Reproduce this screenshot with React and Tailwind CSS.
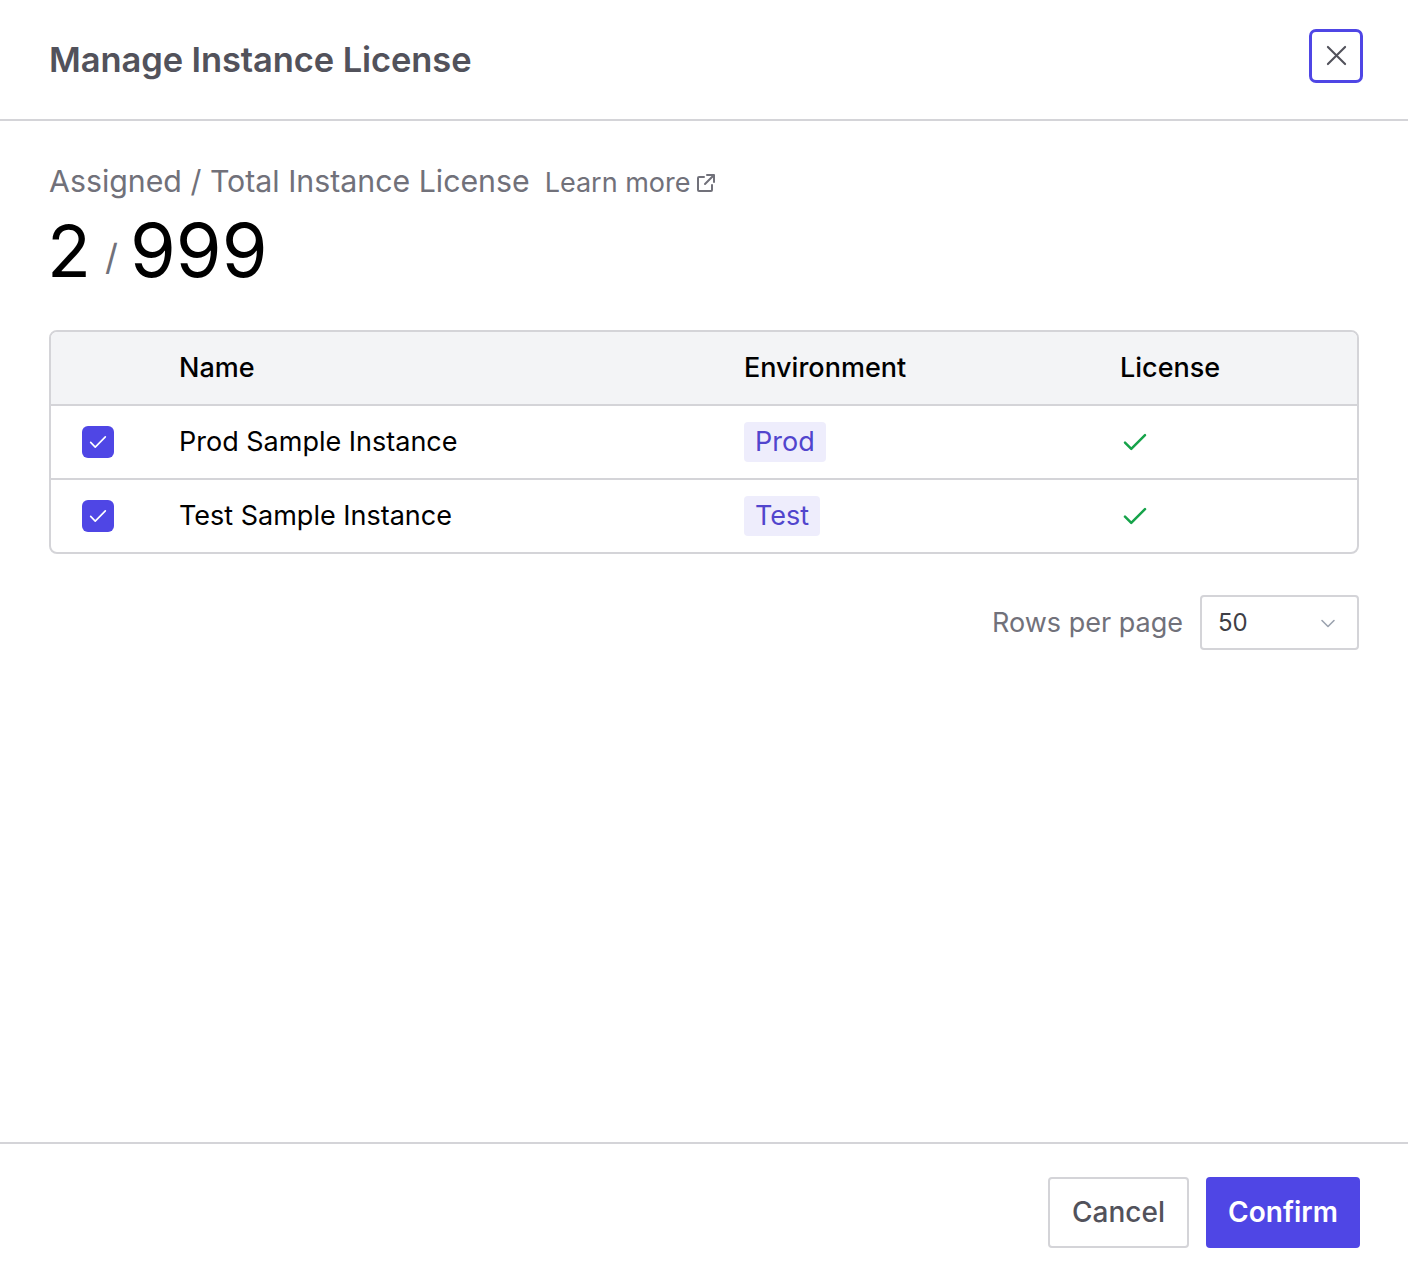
import React from 'react';

const rows = [
  { name: 'Prod Sample Instance', env: 'Prod' },
  { name: 'Test Sample Instance', env: 'Test' },
];

function CheckIcon({ className }) {
  return (
    <svg className={className} viewBox="0 0 24 24" fill="none" stroke="currentColor" strokeLinecap="round" strokeLinejoin="round">
      <path d="M4 12.5l5 5L20 6.5" />
    </svg>
  );
}

export default function App() {
  return (
    <div className="min-h-[1280px] flex flex-col bg-white font-['Inter',sans-serif] text-black">
      {/* Header */}
      <div className="h-[121px] flex items-center justify-between pl-[49px] pr-[45px] border-b-2 border-[#d4d4d8]">
        <h1 className="text-[34.5px] font-semibold text-[#52525b] tracking-[-0.1px]">Manage Instance License</h1>
        <button className="mb-[8px] w-[54px] h-[54px] rounded-[7px] border-[3px] border-[#4f46e5] flex items-center justify-center text-[#52525b]">
          <svg className="w-[21px] h-[21px]" viewBox="0 0 22 22" fill="none" stroke="currentColor" strokeWidth="2.2" strokeLinecap="round">
            <path d="M2 2l18 18M20 2L2 20" />
          </svg>
        </button>
      </div>

      {/* Body */}
      <div className="flex-1 px-[49px] pt-[38px]">
        <div className="flex items-baseline gap-[15px]">
          <span className="text-[30.3px] text-[#71717a]">Assigned / Total Instance License</span>
          <a className="flex items-center gap-[3px] text-[27px] text-[#71717a]">
            Learn more
            <svg className="w-[24px] h-[24px] self-center" viewBox="0 0 24 24" fill="none" stroke="currentColor" strokeWidth="2" strokeLinecap="round" strokeLinejoin="round">
              <path d="M13 4h7v7M20 4l-9 9M18 14v5a1 1 0 0 1-1 1H5a1 1 0 0 1-1-1V7a1 1 0 0 1 1-1h5" />
            </svg>
          </a>
        </div>
        <div className="flex items-baseline mt-[9px] leading-none">
          <span className="text-[72px] -ml-[2px]">2</span>
          <span className="text-[36px] text-[#71717a] ml-[14px] mr-[12px] -translate-y-[7px]">/</span>
          <span className="text-[74px]">999</span>
        </div>

        {/* Table */}
        <div className="mt-[43px] border-2 border-[#d4d4d8] rounded-[8px] overflow-hidden">
          <div className="h-[72px] bg-[#f3f4f6] grid grid-cols-[128px_565px_376px_1fr] items-center text-[27px] font-medium">
            <div />
            <div>Name</div>
            <div>Environment</div>
            <div>License</div>
          </div>
          {rows.map((r) => (
            <div key={r.name} className="h-[74px] border-t-2 border-[#d4d4d8] grid grid-cols-[128px_565px_376px_1fr] items-center text-[27px]">
              <div className="pl-[31px]">
                <div className="w-[32px] h-[32px] rounded-[6px] bg-[#4f46e5] flex items-center justify-center">
                  <CheckIcon className="w-[22px] h-[22px] text-white [stroke-width:1.8]" />
                </div>
              </div>
              <div>{r.name}</div>
              <div>
                <span className="inline-block bg-[#eeedfc] text-[#5145cd] rounded-[4px] px-[11px] py-[2px] leading-[36px]">{r.env}</span>
              </div>
              <div>
                <CheckIcon className="w-[30px] h-[30px] text-[#16a34a] [stroke-width:2]" />
              </div>
            </div>
          ))}
        </div>

        {/* Pagination */}
        <div className="mt-[41px] flex items-center justify-end gap-[17px]">
          <span className="text-[27px] text-[#71717a]">Rows per page</span>
          <div className="w-[159px] h-[55px] border-2 border-[#d4d4d8] rounded-[4px] flex items-center justify-between pl-[16px] pr-[20px]">
            <span className="text-[24px] text-[#3f3f46]">50</span>
            <svg className="w-[18px] h-[18px] text-[#9ca3af]" viewBox="0 0 18 18" fill="none" stroke="currentColor" strokeWidth="1.6" strokeLinecap="round" strokeLinejoin="round">
              <path d="M3 6.5l6 6 6-6" />
            </svg>
          </div>
        </div>
      </div>

      {/* Footer */}
      <div className="border-t-2 border-[#d4d4d8] h-[138px] flex items-center justify-end gap-[17px] pr-[48px]">
        <button className="w-[141px] h-[71px] border-2 border-[#d4d4d8] rounded-[4px] text-[28px] font-medium text-[#52525b]">Cancel</button>
        <button className="w-[154px] h-[71px] rounded-[4px] bg-[#4f46e5] text-[28px] font-semibold text-white">Confirm</button>
      </div>
    </div>
  );
}
